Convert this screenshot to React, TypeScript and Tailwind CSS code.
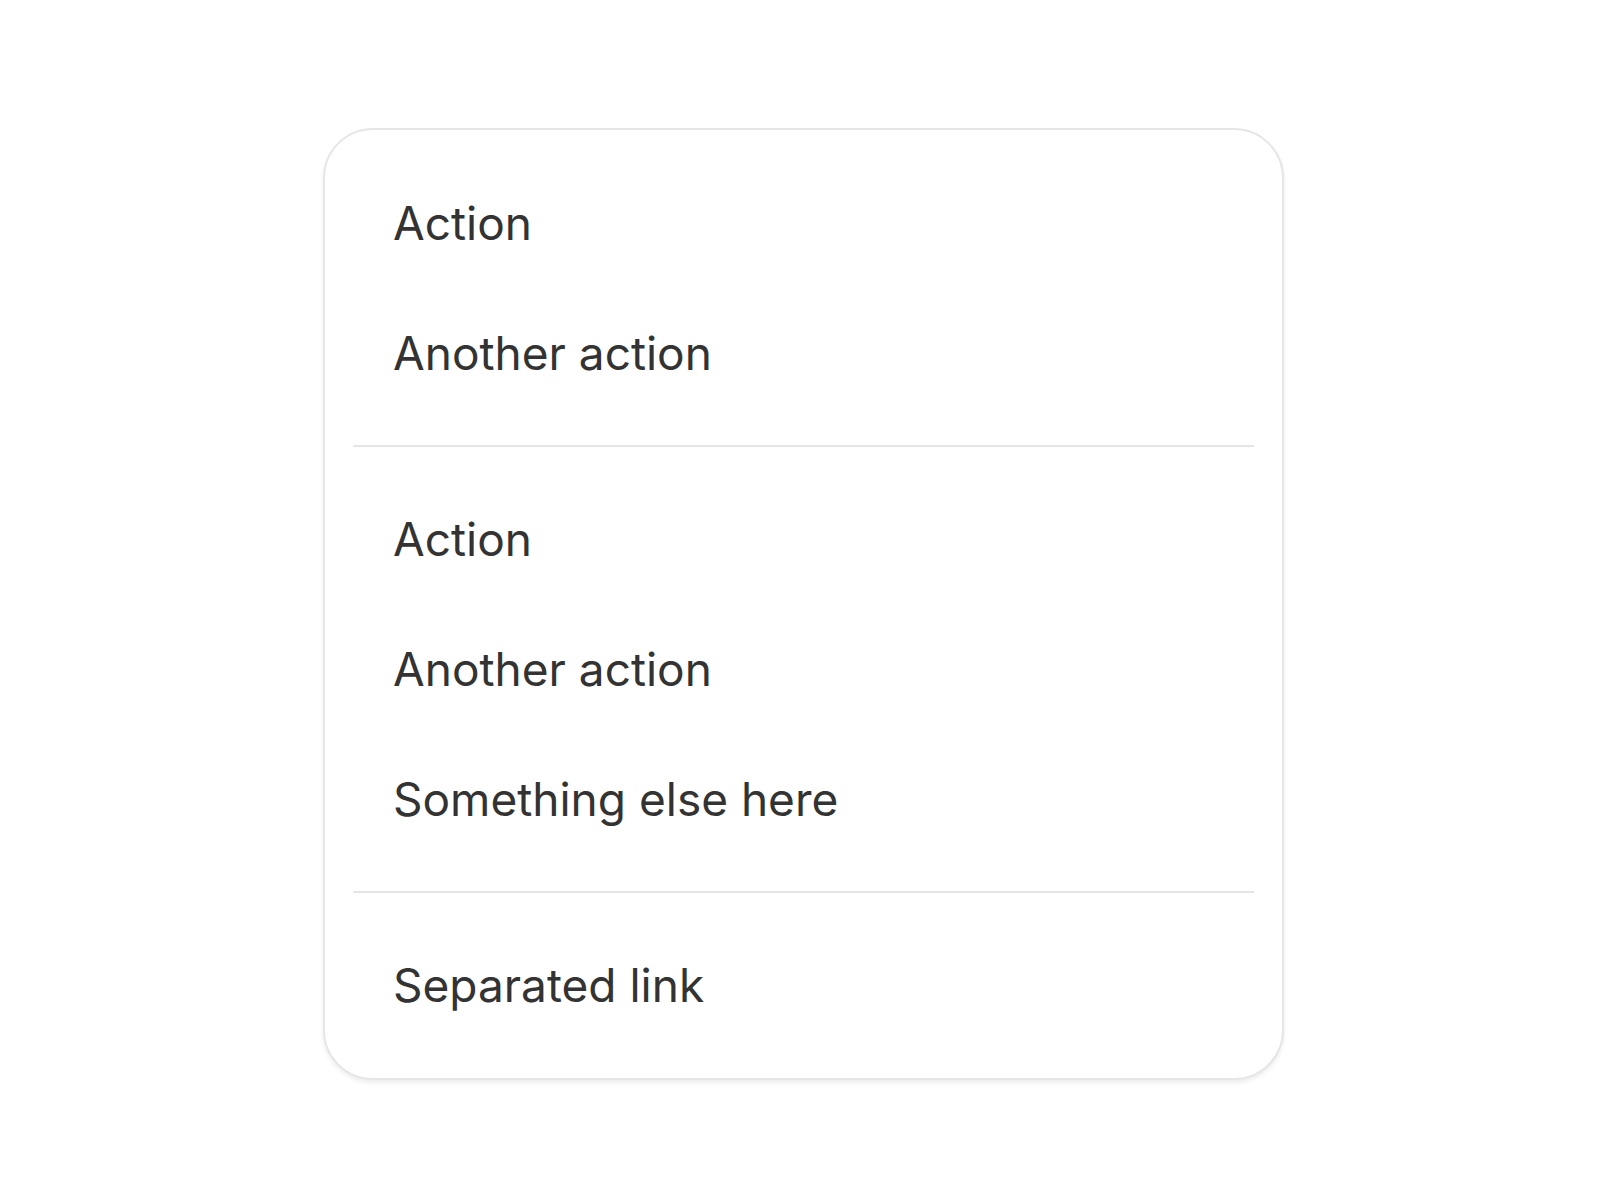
const groups = [
  ["Action", "Another action"],
  ["Action", "Another action", "Something else here"],
  ["Separated link"],
];

function MenuItem({ label }: { label: string }) {
  return (
    <a
      href="#"
      className="flex h-[130px] items-center px-[68px] text-[46px] leading-none text-[#333333]"
    >
      {label}
    </a>
  );
}

export default function App() {
  return (
    <div className="min-h-screen bg-white font-['Inter','Liberation_Sans',sans-serif]">
      <div className="pt-[128px] pl-[323px]">
        <div className="w-[961px] rounded-[50px] border-2 border-[#e6e6e6] bg-white py-[28px] shadow-[0_3px_4px_rgba(0,0,0,0.07)]">
          {groups.map((items, i) => (
            <div key={i}>
              {i > 0 && <div className="mx-[28px] my-[27px] h-[2px] bg-[#e5e5e5]" />}
              {items.map((label) => (
                <MenuItem key={label + i} label={label} />
              ))}
            </div>
          ))}
        </div>
      </div>
    </div>
  );
}
